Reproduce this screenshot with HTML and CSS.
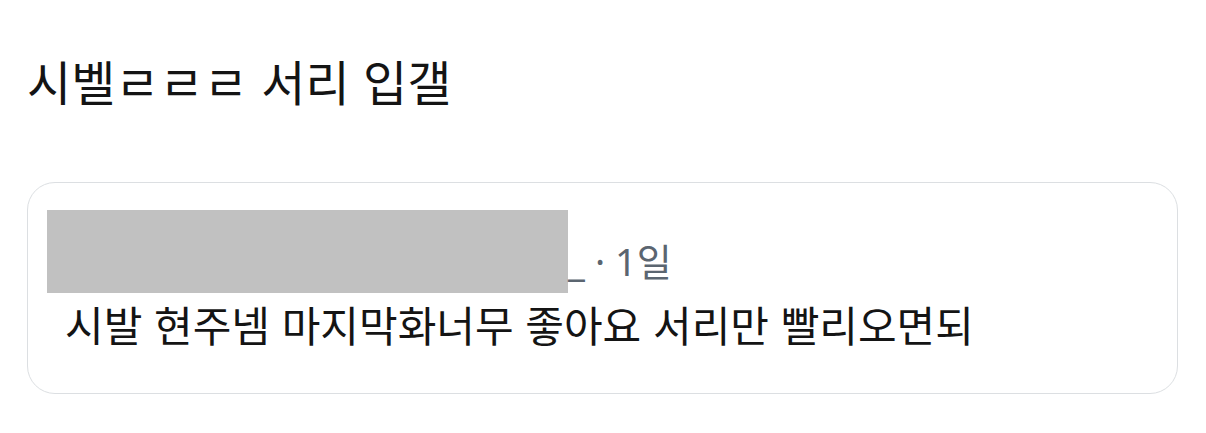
FILE: index.html
```html
<!DOCTYPE html>
<html lang="ko">
<head>
  <meta charset="UTF-8" />
  <meta name="viewport" content="width=device-width, initial-scale=1.0"/>
  <title>서리 입갤</title>
  <link rel="stylesheet" href="styles.css">
</head>
<body>

<main class="page">
  <h1 class="title">시벨ㄹㄹㄹ 서리 입갤</h1>

  <div class="comment">
    <div class="meta">
      <span class="redacted"></span>
      <span class="handle">_</span>
      <span class="dot">·</span>
      <span class="time">1일</span>
    </div>
    <p class="text">시발 현주넴 마지막화너무 좋아요 서리만 빨리오면되</p>
  </div>
</main>

</body>
</html>
```

FILE: styles.css
```css
body {
  font-family: "Noto Sans CJK KR", sans-serif;
  margin: 0; padding: 0;
  background: #fff;
  color: #141414;
}
.page {
  padding: 40px 28px 0 27px;
}
.title {
  font-size: 48px;
  font-weight: 400;
  line-height: 80px;
  margin: 0 0 62px;
}
.comment {
  border: 1px solid #dcdfe2;
  border-radius: 28px;
  height: 183px;
  padding: 27px 0 0 19px;
  width: 1130px;
}
.meta {
  display: flex;
  align-items: flex-end;
  color: #5b6570;
  font-family: "Noto Sans", "Noto Sans CJK KR", sans-serif;
  font-size: 38px;
  line-height: 1;
}
.redacted {
  display: inline-block;
  width: 521px;
  height: 83px;
  background: #c1c1c1;
}
.handle {
  margin-bottom: 13px;
}
.dot {
  margin: 0 10px 13px 10px;
  font-size: 38px;
}
.time {
  margin-bottom: 13px;
}
.text {
  margin: 6px 0 0 18px;
  font-size: 42px;
  line-height: 1.2;
  white-space: nowrap;
}
```
